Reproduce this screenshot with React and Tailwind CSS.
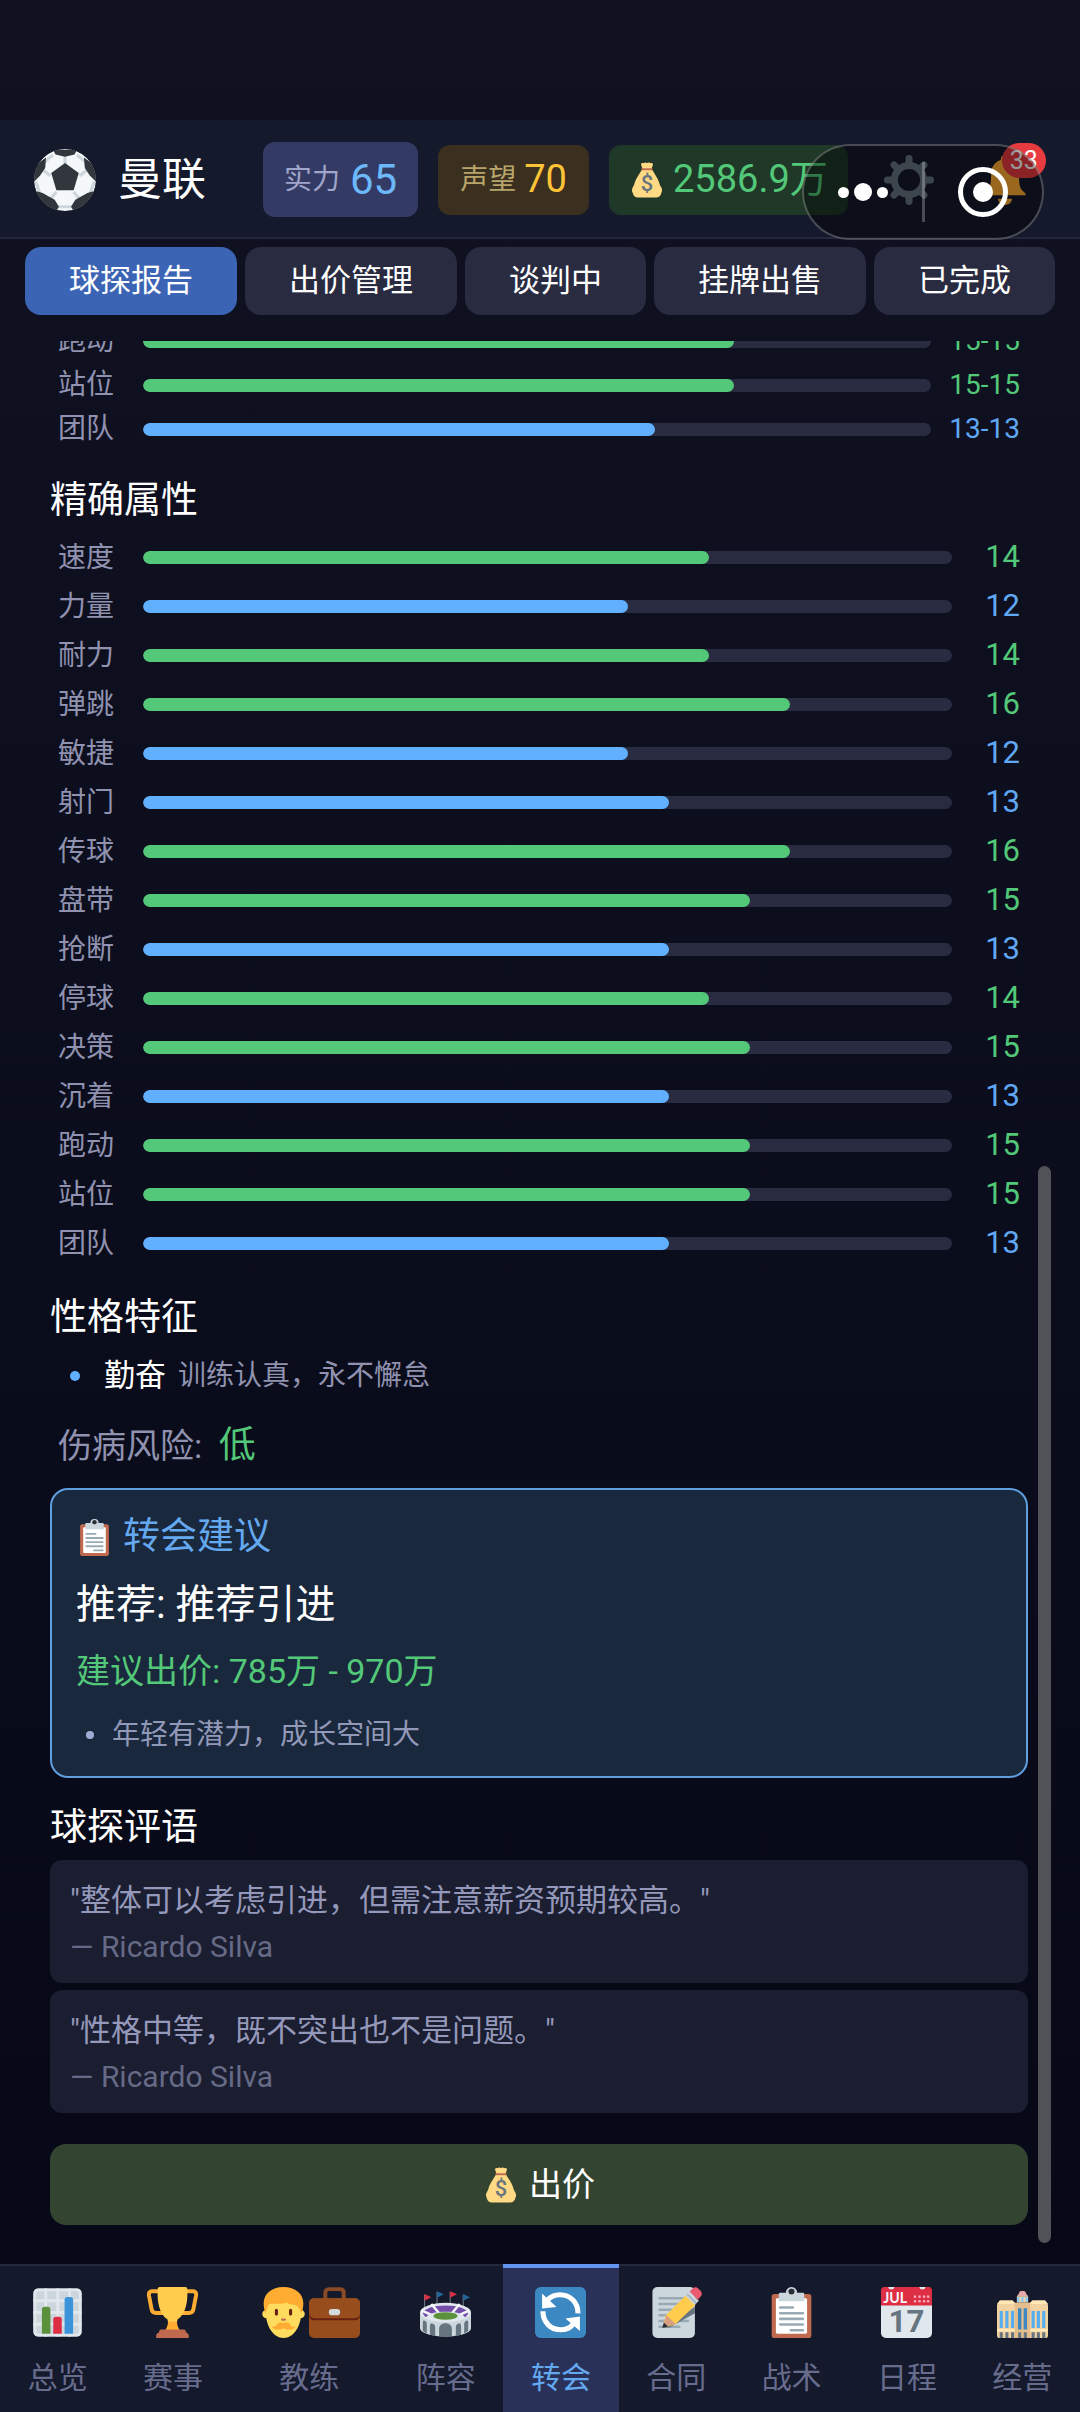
import React, { useState } from 'react';

const rangeStats = [
  { label: '跑动', value: 15, text: '15-15' },
  { label: '站位', value: 15, text: '15-15' },
  { label: '团队', value: 13, text: '13-13' },
];

const exactStats = [
  { label: '速度', value: 14 },
  { label: '力量', value: 12 },
  { label: '耐力', value: 14 },
  { label: '弹跳', value: 16 },
  { label: '敏捷', value: 12 },
  { label: '射门', value: 13 },
  { label: '传球', value: 16 },
  { label: '盘带', value: 15 },
  { label: '抢断', value: 13 },
  { label: '停球', value: 14 },
  { label: '决策', value: 15 },
  { label: '沉着', value: 13 },
  { label: '跑动', value: 15 },
  { label: '站位', value: 15 },
  { label: '团队', value: 13 },
];

const comments = [
  { text: '"整体可以考虑引进，但需注意薪资预期较高。"', author: 'Ricardo Silva' },
  { text: '"性格中等，既不突出也不是问题。"', author: 'Ricardo Silva' },
];

const tabs = ['球探报告', '出价管理', '谈判中', '挂牌出售', '已完成'];

const SoccerBall = ({ className }) => (
  <svg viewBox="0 0 36 36" className={className} aria-hidden="true">
    <defs>
      <clipPath id="ball">
        <circle cx="18" cy="18" r="18" />
      </clipPath>
    </defs>
    <g clipPath="url(#ball)">
      <circle cx="18" cy="18" r="18" fill="#F5F8FA" />
      <path
        d="M18 9V4M9.5 15.5 5.5 12.5M26.500 15.500l4-3M13 25l-3.500 4M23 25l3.500 4M11 3.500 5.500 8M25 3.500 30.500 8M1 19l2.500 7M35 19l-2.500 7M14 33.500h8"
        stroke="#CCD6DD"
        strokeWidth="1.800"
        fill="none"
      />
      <path d="M18 8.200 26 14l-3 10H13L10 14z" fill="#31373D" />
      <path d="M11 .5h14l-1.500 2.700L18 4.500l-5.500-1.300z" fill="#31373D" />
      <path d="M7 5 6.500 11 3.500 15.500 0 19V10z" fill="#31373D" />
      <path d="m29 5 .5 6 3 4.500L36 19V10z" fill="#31373D" />
      <path d="M1.500 24.500 5 25.500 12 29.500 14.500 33.500 13 36H5z" fill="#31373D" />
      <path d="M34.500 24.500 31 25.500 24 29.500 21.500 33.500 23 36h8z" fill="#31373D" />
    </g>
  </svg>
);

const MoneyBag = ({ className }) => (
  <svg viewBox="0 0 36 36" className={className} aria-hidden="true">
    <path
      d="M12 2.500C12 1 13.500.5 14.500 1.200 15.500.3 16.800.3 18 1c1.200-.7 2.500-.7 3.500.2 1-.7 2.500-.2 2.500 1.300l-1.500 4.500h-9z"
      fill="#FFD983"
    />
    <path
      d="M13 7.500C11 11 8.500 14 6.500 18.500c-1.200 2.700-.8 3.500-2 5.500C2.700 27 2.500 29 3.800 31c.4 2.500 2.200 4.500 5.200 4.500h18c3 0 5-2 5.300-4.500 1.200-2 1-4.500-.9-7-1-2-.9-3-2-5.500C27.500 14 25 11 23 7.500z"
      fill="#FFD983"
    />
    <path d="M12.500 6.300h11v1.900h-11z" fill="#BF6952" />
    <text
      x="18"
      y="29"
      textAnchor="middle"
      fontSize="22"
      fontWeight="500"
      fontFamily="Roboto, sans-serif"
      fill="#67757F"
    >
      $
    </text>
  </svg>
);

const Gear = ({ className }) => (
  <svg viewBox="0 0 36 36" className={className} aria-hidden="true">
    <circle cx="18" cy="18" r="10.500" fill="none" stroke="#66757F" strokeWidth="5" />
    <g stroke="#66757F" strokeWidth="5" strokeLinecap="round">
      <path d="M18 2.500v4M18 29.500v4M2.500 18h4M29.500 18h4M7.200 7.200l2.600 2.600M26.200 26.200l2.600 2.600M7.200 28.800l2.600-2.600M26.200 9.800l2.600-2.600" />
    </g>
  </svg>
);

const Bell = ({ className }) => (
  <svg viewBox="0 0 36 36" className={className} aria-hidden="true">
    <path
      d="M28 13c0 11 1.500 11.500 3.500 13.500.8.7 1.500 1.500 1.500 2.500H3c0-1 .7-1.800 1.500-2.500C6.500 24.500 8 24 8 13 8 8 12 3 18 3s10 5 10 10z"
      fill="#FFAC33"
    />
    <circle cx="18" cy="3" r="3" fill="#FFAC33" />
    <path d="M13 31.500h10c0 2.500-2.200 4.500-5 4.500s-5-2-5-4.500z" fill="#FFAC33" />
  </svg>
);

const Clipboard = ({ className }) => (
  <svg viewBox="0 0 36 36" className={className} aria-hidden="true">
    <rect x="4" y="5" width="28" height="31" rx="2" fill="#C1694F" />
    <rect x="7" y="8" width="22" height="25" rx="1" fill="#FFF" />
    <path
      d="M26 4h-4a4 4 0 0 0-8 0h-4a1 1 0 0 0-1 1v5h18V5a1 1 0 0 0-1-1zm-8 1.200a2 2 0 1 1 0-4 2 2 0 0 1 0 4z"
      fill="#CCD6DD"
    />
    <circle cx="18" cy="3.200" r="2" fill="#292F33" />
    <path
      d="M10 14.500h9M10 18.500h16M10 22.500h16M10 26.500h16M17.500 30.500H26"
      stroke="#99AAB5"
      strokeWidth="1.800"
      strokeLinecap="round"
    />
  </svg>
);

const BarChart = ({ className }) => (
  <svg viewBox="0 0 36 36" className={className} aria-hidden="true">
    <rect x="1" y="1" width="34" height="34" rx="3.500" fill="#CCD6DD" />
    <path
      d="M9.700 1v34M18.200 1v34M26.500 1v34M1 9.700h34M1 18h34M1 26.300h34"
      stroke="#E1E8ED"
      strokeWidth="2"
    />
    <rect x="2" y="2" width="32" height="32" rx="2.500" fill="none" stroke="#E1E8ED" strokeWidth="2" />
    <path d="M7 33V16a2 2 0 0 1 2-2h2a2 2 0 0 1 2 2v17z" fill="#5C913B" />
    <path d="M15 33V23a2 2 0 0 1 2-2h2a2 2 0 0 1 2 2v10z" fill="#DD2E44" />
    <path d="M23 33V9a2 2 0 0 1 2-2h2a2 2 0 0 1 2 2v24z" fill="#3B94D9" />
  </svg>
);

const Trophy = ({ className }) => (
  <svg viewBox="0 0 36 36" className={className} aria-hidden="true">
    <path
      d="M9.500 3H3.500C1.800 3 1.200 4.200 1.400 6l1.800 9.500C3.500 17.400 4.800 18.300 6.500 18.300h6.500M26.500 3h6c1.700 0 2.300 1.200 2.100 3l-1.800 9.500c-.3 1.900-1.600 2.800-3.300 2.800H23"
      fill="none"
      stroke="#FFAC33"
      strokeWidth="2.800"
    />
    <path d="M15 23h6c0 3 .8 6 2.500 8h-11C14.200 29 15 26 15 23z" fill="#FFAC33" />
    <path
      d="M7.500 1.500C7.500.6 8.200 0 9 0h18c.8 0 1.500.6 1.500 1.500C28.800 9 28 18.500 21.500 23c-.5 1.500 0 1.500 0 1.500h-7s.5 0 0-1.500C8 18.500 7.200 9 7.500 1.500z"
      fill="#FFCC4D"
    />
    <path d="M10 30h16c1 0 1.500.8 1.500 2.200 1 0 2 1 2 2.300V36h-23v-1.500c0-1.300 1-2.300 2-2.300C8.500 30.800 9 30 10 30z" fill="#C1694F" />
  </svg>
);

const ManFace = ({ className }) => (
  <svg viewBox="0 0 36 36" className={className} aria-hidden="true">
    <circle cx="6" cy="19" r="3" fill="#FFDC5D" />
    <circle cx="30" cy="19" r="3" fill="#FFDC5D" />
    <path d="M5.500 14C5.500 6 11 3.500 18 3.500S30.500 6 30.500 14v4c0 9-5 18-12.500 18S5.500 27 5.500 18z" fill="#FFDC5D" />
    <path
      d="M18 0C9.500 0 4 5 4 11.500c0 2.500.5 5 1.300 7 .8-2 1.200-5 2.700-6.500C12 11.500 17 12.500 20.500 11c1.500 1.500 3.500 1.500 5 1.500 2.500 0 4 3 5.200 6 .8-2 1.300-4.500 1.300-7C32 5 26.500 0 18 0z"
      fill="#FFAC33"
    />
    <path d="M13 16.500v2.500M23 16.500v2.500" stroke="#662113" strokeWidth="2.200" strokeLinecap="round" />
    <path d="M17 23h2" stroke="#C1694F" strokeWidth="1.500" strokeLinecap="round" />
    <path d="M18 25.500c-3-1.200-4.500.5-5.500 2-1 .8-2 .7-3 .3 1.500 2.500 6 3 8.500 1.200 2.500 1.800 7 1.300 8.500-1.200-1 .4-2 .5-3-.3-1-1.500-2.500-3.200-5.500-2z" fill="#FFAC33" />
  </svg>
);

const Briefcase = ({ className }) => (
  <svg viewBox="0 0 36 36" className={className} aria-hidden="true">
    <path d="M11.500 9V4c0-1.500 1-2.500 2.500-2.500h8c1.500 0 2.500 1 2.500 2.500v5" fill="none" stroke="#8A4B26" strokeWidth="2.800" />
    <rect x="0" y="8" width="36" height="28" rx="3.500" fill="#974E1C" />
    <path d="M0 19c0 3 1.500 4.500 4 4.500h28c2.500 0 4-1.500 4-4.500v-1H0z" fill="#662113" />
    <path d="M0 11.500C0 9.500 1.500 8 3.500 8h29C34.500 8 36 9.500 36 11.500V18c0 2.500-1.500 4-4 4H4c-2.500 0-4-1.500-4-4z" fill="#974E1C" />
    <rect x="14" y="15.500" width="8" height="4.500" rx="2.200" fill="#D5DCE0" />
  </svg>
);

const Stadium = ({ className }) => (
  <svg viewBox="0 0 36 36" className={className} aria-hidden="true">
    <path d="M3.200 18V5.500M12 13V3.500M21.300 13V3.500M30.500 18V5.500" stroke="#66757F" strokeWidth=".8" />
    <path d="m3.200 5 4.800 2.300-4.800 2.400zM21.300 3l4.800 2.200-4.800 2.400z" fill="#DD2E44" />
    <path d="m12 3 4.800 2.200L12 7.600zM30.500 5l4.800 2.300-4.800 2.400z" fill="#226699" />
    <path d="M0 18v11c0 3.500 8 6 18 6s18-2.500 18-6V18z" fill="#CCD6DD" />
    <ellipse cx="18" cy="18" rx="18" ry="6.800" fill="#E1E8ED" />
    <ellipse cx="18" cy="18.500" rx="15.800" ry="5.500" fill="#744EAA" />
    <path d="m1 16.500 9 4M35 16.500l-9 4M8 12l5.500 6.500M28 12l-5.500 6.500" stroke="#F5F8FA" strokeWidth="1.800" />
    <path d="M4 21.500c3-3.500 8-4 14-4s11 .5 14 4c-3 2-8 3.200-14 3.200s-11-1.200-14-3.200z" fill="#E1E8ED" />
    <ellipse cx="18" cy="20.500" rx="8.500" ry="2.700" fill="#5C913B" />
    <path
      d="M13.500 35v-5.500c0-2.500 2-4 4.500-4s4.500 1.500 4.500 4V35c-3 .3-6 .3-9 0zM7 33.500v-6c0-1.200.7-2 1.700-1.800 1.200.2 2 1.200 2 2.500v6.300zM2 31v-6c0-1 .5-1.500 1.300-1.200 1 .4 1.500 1.200 1.500 2.300V32.800zM29 33.500v-6c0-1.200-.7-2-1.700-1.800-1.200.2-2 1.200-2 2.500v6.300zM34 31v-6c0-1-.5-1.500-1.300-1.200-1 .4-1.500 1.200-1.500 2.300V32.800z"
      fill="#66757F"
    />
  </svg>
);

const Transfer = ({ className }) => (
  <svg viewBox="0 0 36 36" className={className} aria-hidden="true">
    <rect width="36" height="36" rx="4" fill="#3B88C3" />
    <path d="M8.500 9.500C11 6.800 14.300 5.500 17.500 5.500 25 5.500 30.500 11 30.300 18.600" fill="none" stroke="#FFF" strokeWidth="3.600" />
    <path d="M5.600 17.200C5.600 24.800 11 30.200 18 30.200c4 0 7-1.500 9-4" fill="none" stroke="#FFF" strokeWidth="3.600" />
    <path d="M5 4.500v10.700l10.200-1zM31.700 31V20.800l-10.200 1.400z" fill="#FFF" />
  </svg>
);

const Memo = ({ className }) => (
  <svg viewBox="0 0 36 36" className={className} aria-hidden="true">
    <rect x="1" y="0" width="30" height="36" rx="3.500" fill="#CCD6DD" />
    <path
      d="M6 8h18M6 12h16M6 16h14M6 20h10M6 24h20M6 28h14"
      stroke="#99AAB5"
      strokeWidth="1.800"
      strokeLinecap="round"
    />
    <path d="m9 28.500 4 0 18-10V14z" fill="#66757F" />
    <path d="m8.500 28.500 1.800-8.300L24.500 6l7 6.500L17 26.500z" fill="#FFCC4D" />
    <path d="m8.500 28.500 2.300-8.500 6.500 6z" fill="#D99E82" />
    <path d="m8 29 1-4 3 2.800z" fill="#292F33" />
    <path d="m24.300 6.200 3-3 6.500 6.500-3 3z" fill="#CCD6DD" />
    <path d="m25.500 5 6.500 6.500" stroke="#99AAB5" strokeWidth=".9" />
    <path d="m27.300 3.200 2-2c1.500-1.500 3-1.200 4.500.3l1 1c1.500 1.500 1.300 3.200 0 4.500l-1.800 2z" fill="#EA596E" />
  </svg>
);

const Calendar = ({ className }) => (
  <svg viewBox="0 0 36 36" className={className} aria-hidden="true">
    <rect width="36" height="36" rx="3.500" fill="#E1E8ED" />
    <path d="M0 13V2.500C0 1 1 0 2.500 0H5a2.300 2.300 0 0 0 4.500 0H27a2.300 2.300 0 0 0 4.500 0h2C35 0 36 1 36 2.500V13z" fill="#DD2E44" />
    <text x="1.500" y="11" fontSize="10" fontWeight="700" fontFamily="Lato, sans-serif" fill="#F5F8FA">
      JUL
    </text>
    <g fill="#F4ABBA">
      <circle cx="24" cy="6.800" r=".9" />
      <circle cx="27.200" cy="6.800" r=".9" />
      <circle cx="30.400" cy="6.800" r=".9" />
      <circle cx="33.300" cy="6.800" r=".9" />
      <circle cx="24" cy="10" r=".9" />
      <circle cx="27.200" cy="10" r=".9" />
      <circle cx="30.400" cy="10" r=".9" />
      <circle cx="33.300" cy="10" r=".9" />
    </g>
    <text x="18" y="32" textAnchor="middle" fontSize="22" fontWeight="700" fontFamily="Roboto, sans-serif" fill="#66757F">
      17
    </text>
  </svg>
);

const Building = ({ className }) => (
  <svg viewBox="0 0 36 36" className={className} aria-hidden="true">
    <path d="M0 12.500 2 9.500h9l2 2V36H2a2 2 0 0 1-2-2zM36 12.500l-2-3h-9l-2 2V36h11a2 2 0 0 0 2-2z" fill="#F3D2A2" />
    <path d="M2 9.500h9l2 2.500H0zM25 9.500h9l2 2.500H23z" fill="#FFE8B6" />
    <path d="M15.500 4.500c0-1.500 1-1.700 2.500-1.700s2.500.2 2.500 1.700l1.500 2h-8z" fill="#E6AAAA" />
    <path d="M14 6.500h8v4.500h-8z" fill="#F3D2A2" />
    <path d="M15 7v3.500M18 7v3.500M21 7v3.500" stroke="#88C9F9" strokeWidth="1.600" />
    <path d="M12.500 11h11v25h-11z" fill="#E5BE8D" />
    <path d="M3 17v12M7 17v12M11 17v12M25.500 17v12M29.200 17v12M33 17v12" stroke="#55ACEE" strokeWidth="2.200" />
    <path d="M16 15v15M20 15v15" stroke="#3B88C3" strokeWidth="2.400" />
    <path d="M0 30.500h12.500M23.500 30.500H36" stroke="#FFE8B6" strokeWidth="1.600" />
    <path d="M3 32v4M7 32v4M11 32v4M16 32v4M20 32v4M25.500 32v4M29.200 32v4M33 32v4" stroke="#66757F" strokeWidth="2.200" />
  </svg>
);

const navItems = [
  { label: '总览', icons: [BarChart] },
  { label: '赛事', icons: [Trophy] },
  { label: '教练', icons: [ManFace, Briefcase] },
  { label: '阵容', icons: [Stadium] },
  { label: '转会', icons: [Transfer] },
  { label: '合同', icons: [Memo] },
  { label: '战术', icons: [Clipboard] },
  { label: '日程', icons: [Calendar] },
  { label: '经营', icons: [Building] },
];

const StatBar = ({ value }) => (
  <div className="h-[13px] flex-1 overflow-hidden rounded-full bg-[#292b40]">
    <div
      className={`h-full rounded-full ${value >= 14 ? 'bg-[#52c878]' : 'bg-[#60b0ff]'}`}
      style={{ width: `${value * 5}%` }}
    ></div>
  </div>
);

const valueColor = (value) => (value >= 14 ? 'text-[#52c878]' : 'text-[#60a8f5]');

const SectionTitle = ({ children }) => (
  <h2 className="mt-6 mb-[6px] text-[37px] leading-[52px] text-white">{children}</h2>
);

const App = () => {
  const [activeTab, setActiveTab] = useState('球探报告');
  const [activeNav, setActiveNav] = useState('转会');

  return (
    <div className="flex h-screen flex-col bg-linear-to-b from-[#101222] to-[#060816] pt-[120px] font-[Roboto,'Noto_Sans_CJK_SC',sans-serif]">
      {/* Header */}
      <header className="relative flex items-center border-b-2 border-[#25283d] bg-[#14192c] pt-[22px] pb-5 pl-[34px]">
        <SoccerBall className="h-[62px] w-[62px] shrink-0" />
        <h1 className="ml-[22px] shrink-0 text-[44px] leading-[52px] text-white">曼联</h1>
        <div className="ml-[57px] flex shrink-0 items-center gap-5">
          <div className="flex h-[75px] items-center gap-[10px] rounded-xl bg-[#333b64] px-[21px]">
            <span className="text-[28px] text-[#a0a5cc]">实力</span>
            <span className="text-[42px] text-[#6cb8fa]">65</span>
          </div>
          <div className="flex h-[70px] items-center gap-2 rounded-xl bg-[#3b301f] px-[22px]">
            <span className="text-[28px] text-[#b8a56c]">声望</span>
            <span className="text-[38px] text-[#fcc436]">70</span>
          </div>
          <div className="flex h-[70px] items-center gap-2 rounded-xl bg-[#1f3828] px-5">
            <MoneyBag className="h-9 w-9" />
            <span className="text-[38px] text-[#52c878]">2586.9万</span>
          </div>
        </div>
        <button type="button" aria-label="设置" className="ml-9 shrink-0">
          <Gear className="h-[50px] w-[50px]" />
        </button>
        <button type="button" aria-label="通知" className="relative ml-[46px] shrink-0">
          <Bell className="h-[50px] w-[50px]" />
          <span className="absolute -top-3 -right-4 rounded-full bg-[#e83b40] px-2 text-[25px] leading-[35px] text-white">
            33
          </span>
        </button>

        {/* Mini program capsule */}
        <div className="absolute top-6 right-9 flex h-[96px] w-[242px] items-center rounded-full border-2 border-white/25 bg-black/40">
          <button type="button" aria-label="更多" className="flex flex-1 items-center justify-center gap-[5px]">
            <span className="h-[11px] w-[11px] rounded-full bg-white"></span>
            <span className="h-[18px] w-[18px] rounded-full bg-white"></span>
            <span className="h-[11px] w-[11px] rounded-full bg-white"></span>
          </button>
          <span className="h-[60px] w-[3px] bg-white/25"></span>
          <button type="button" aria-label="关闭" className="flex flex-1 items-center justify-center">
            <span className="flex h-[50px] w-[50px] items-center justify-center rounded-full border-5 border-white">
              <span className="h-5 w-5 rounded-full bg-white"></span>
            </span>
          </button>
        </div>
      </header>

      {/* Tabs */}
      <div className="mb-[26px] flex gap-2 px-[25px] pt-2">
        {tabs.map((tab) => (
          <button
            key={tab}
            type="button"
            onClick={() => setActiveTab(tab)}
            className={`flex-auto rounded-2xl text-[31px] leading-[68px] text-white ${
              activeTab === tab ? 'bg-[#3c64b4]' : 'bg-[#292b40]'
            }`}
          >
            {tab}
          </button>
        ))}
      </div>

      {/* Report, scrolled to the end */}
      <main className="relative flex min-h-0 flex-1 flex-col justify-end overflow-hidden pr-[52px] pb-[39px] pl-[50px]">
        <ul className="px-2">
          {rangeStats.map((stat) => (
            <li key={stat.label} className="flex h-11 items-center">
              <span className="w-[85px] text-[28px] text-[#9092b0]">{stat.label}</span>
              <StatBar value={stat.value} />
              <span className={`w-[89px] text-right text-[28px] ${valueColor(stat.value)}`}>{stat.text}</span>
            </li>
          ))}
        </ul>

        <SectionTitle>精确属性</SectionTitle>
        <ul className="px-2">
          {exactStats.map((stat) => (
            <li key={stat.label} className="flex h-[49px] items-center">
              <span className="w-[85px] text-[28px] text-[#9092b0]">{stat.label}</span>
              <StatBar value={stat.value} />
              <span className={`w-[68px] text-right text-[31px] ${valueColor(stat.value)}`}>{stat.value}</span>
            </li>
          ))}
        </ul>

        <SectionTitle>性格特征</SectionTitle>
        <ul className="pt-2 pl-5">
          <li className="flex items-center leading-9">
            <span className="h-[10px] w-[10px] rounded-full bg-[#60b0ff]"></span>
            <span className="ml-6 text-[31px] text-white">勤奋</span>
            <span className="ml-3 text-[28px] text-[#9092b0]">训练认真，永不懈怠</span>
          </li>
        </ul>
        <p className="mt-[30px] mb-5 pl-2 text-[34px] leading-[44px] text-[#9092b0]">
          伤病风险: <span className="ml-2 text-[37px] text-[#52c878]">低</span>
        </p>

        <section className="rounded-[18px] border-2 border-[#5f9fe0] bg-[#1a283d] px-6 pt-[25px] pb-[23px]">
          <h3 className="flex items-center gap-[10px] text-[37px] leading-[44px] text-[#64a8f0]">
            <Clipboard className="h-[37px] w-[37px]" />
            转会建议
          </h3>
          <p className="mt-[22px] text-[40px] leading-[48px] text-white">推荐: 推荐引进</p>
          <p className="mt-[22px] text-[34px] leading-10 text-[#52c878]">建议出价: 785万 - 970万</p>
          <ul className="mt-[26px] pl-[10px]">
            <li className="flex items-center gap-[18px] text-[28px] leading-9 text-[#9299b8]">
              <span className="h-2 w-2 rounded-full bg-[#a0abd4]"></span>
              年轻有潜力，成长空间大
            </li>
          </ul>
        </section>

        <SectionTitle>球探评语</SectionTitle>
        <div className="flex flex-col gap-[7px]">
          {comments.map((comment) => (
            <blockquote key={comment.text} className="rounded-xl bg-[#1b1d30] px-5 pt-[18px] pb-[13px]">
              <p className="text-[31px] leading-[46px] text-[#9498ba]">{comment.text}</p>
              <footer className="text-[30px] leading-[46px] text-[#666a86]">— {comment.author}</footer>
            </blockquote>
          ))}
        </div>

        <button
          type="button"
          className="mt-[31px] flex h-[81px] shrink-0 items-center justify-center gap-[10px] rounded-2xl bg-[#334431] text-[33px] text-white"
        >
          <MoneyBag className="h-9 w-9" />
          出价
        </button>

        <div className="absolute right-[29px] bottom-[21px] h-[56%] w-[13px] rounded-full bg-[#505257]"></div>
      </main>

      {/* Bottom navigation */}
      <nav className="flex">
        {navItems.map((item) => {
          const active = activeNav === item.label;
          return (
            <button
              key={item.label}
              type="button"
              onClick={() => setActiveNav(item.label)}
              className={`flex h-[148px] flex-auto flex-col items-center ${
                active
                  ? 'border-t-4 border-[#6394f0] bg-[#293158] pt-[19px] text-[#64a8f0]'
                  : 'border-t-2 border-[#25283a] bg-[#14192c] pt-[21px] text-[#686c8c]'
              }`}
            >
              <span className="flex">
                {item.icons.map((Icon, i) => (
                  <Icon key={i} className="h-[51px] w-[51px]" />
                ))}
              </span>
              <span className="mt-[18px] text-[30px] leading-[44px]">{item.label}</span>
            </button>
          );
        })}
      </nav>
    </div>
  );
};

export default App;
